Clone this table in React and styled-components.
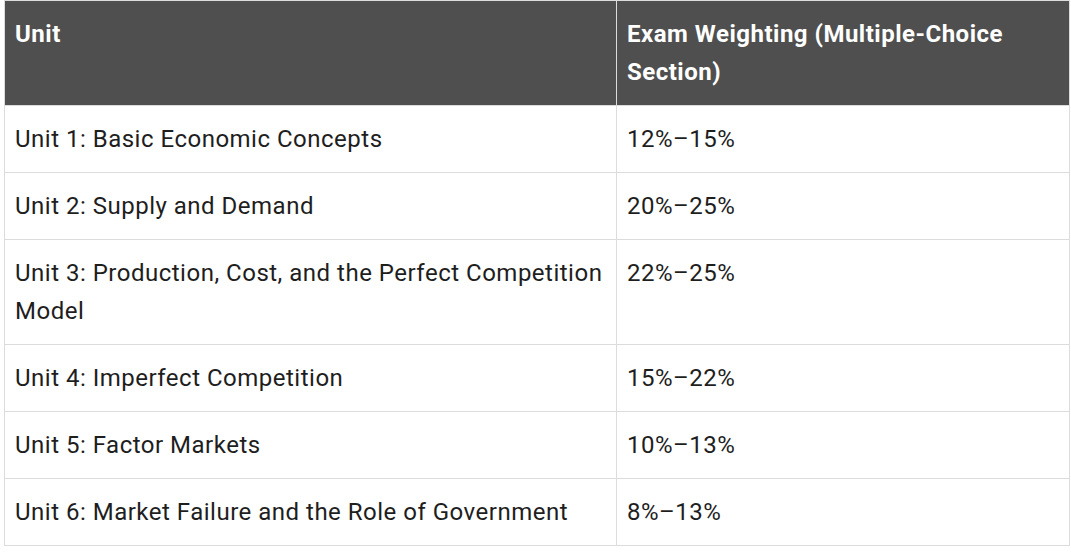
import React from 'react'
import styled, { createGlobalStyle } from 'styled-components'

const GlobalStyle = createGlobalStyle`
  html, body { margin: 0; padding: 0; background: #fff; }
  body { font-family: Roboto, "Liberation Sans", sans-serif; }
`;

const rows = [
  ['Unit 1: Basic Economic Concepts', '12%–15%'],
  ['Unit 2: Supply and Demand', '20%–25%'],
  ['Unit 3: Production, Cost, and the Perfect Competition Model', '22%–25%'],
  ['Unit 4: Imperfect Competition', '15%–22%'],
  ['Unit 5: Factor Markets', '10%–13%'],
  ['Unit 6: Market Failure and the Role of Government', '8%–13%'],
];

function App() {
  return (
    <>
      <GlobalStyle />
      <Wrap>
        <Table>
          <colgroup>
            <col style={{ width: 612 }} />
            <col style={{ width: 453 }} />
          </colgroup>
          <thead>
            <tr>
              <Th>Unit</Th>
              <Th>Exam Weighting (Multiple-Choice Section)</Th>
            </tr>
          </thead>
          <tbody>
            {rows.map(([unit, weight]) => (
              <tr key={unit}>
                <Td>{unit}</Td>
                <Td>{weight}</Td>
              </tr>
            ))}
          </tbody>
        </Table>
      </Wrap>
    </>
  );
}

const Wrap = styled.div`
  padding: 0 2px 0 4px;
`;

const Table = styled.table`
  width: 1065px;
  table-layout: fixed;
  border-collapse: collapse;
  font-size: 24px;
  line-height: 38px;
  letter-spacing: 0.5px;
`;

const Th = styled.th`
  background: #4f4f4f;
  color: #fff;
  font-weight: 700;
  text-align: left;
  vertical-align: top;
  padding: 14px 10px;
  border: 1px solid #dcdcdc;
`;

const Td = styled.td`
  color: #1e1e1e;
  vertical-align: top;
  padding: 14px 10px;
  border: 1px solid #dcdcdc;
`;

export default App;
